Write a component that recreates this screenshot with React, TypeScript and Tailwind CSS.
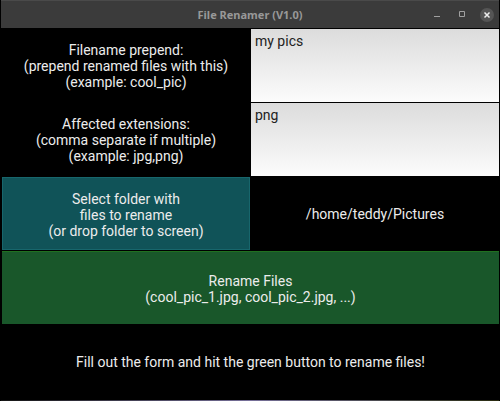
import type { ReactNode } from "react";

function FieldLabel({ htmlFor, children }: { htmlFor: string; children: ReactNode }) {
  return (
    <label htmlFor={htmlFor} className="flex items-center justify-center pt-0.5 text-center">
      <span>{children}</span>
    </label>
  );
}

function FieldInput({ id, value }: { id: string; value: string }) {
  return (
    <textarea
      id={id}
      defaultValue={value}
      spellCheck={false}
      className="mt-px block h-[73px] w-full resize-none border-0 bg-linear-to-b from-[#dcdcdc] to-[#fcfcfc] px-1 pt-1 text-[#222222] outline-none"
    />
  );
}

export default function App() {
  return (
    <div className="flex min-h-screen flex-col bg-black px-px font-[Roboto,sans-serif] text-[14px] leading-4 text-[#ececec]">
      <header className="grid h-7 grid-cols-[1fr_auto_1fr] items-center border-t border-[#4a4a4a] bg-[#3b3b3b]">
        <h1 className="col-start-2 font-['Noto_Sans',sans-serif] text-[11px] font-bold text-[#989898]">
          File Renamer (V1.0)
        </h1>
        <div className="flex items-center justify-end gap-[11px] pr-[5px]">
          <button aria-label="Minimize" className="flex h-3.5 w-3.5 items-center justify-center">
            <svg width="14" height="14" viewBox="0 0 14 14" fill="none" stroke="#a0a0a0">
              <path d="M4 8.5h6" />
            </svg>
          </button>
          <button aria-label="Maximize" className="flex h-3.5 w-3.5 items-center justify-center">
            <svg width="14" height="14" viewBox="0 0 14 14" fill="none" stroke="#a0a0a0">
              <path d="M4.5 3.5h5v5h-5z" />
            </svg>
          </button>
          <button aria-label="Close" className="flex h-3.5 w-3.5 items-center justify-center rounded-full bg-[#555555]">
            <svg width="14" height="14" viewBox="0 0 14 14" fill="none" stroke="#eeeeee" strokeWidth="1.5">
              <path d="M4.5 4.5l5 5M9.5 4.5l-5 5" />
            </svg>
          </button>
        </div>
      </header>

      <main className="grid flex-1 auto-rows-[74px] grid-cols-2 gap-x-px pb-0.5 pl-px">
        <FieldLabel htmlFor="prepend">
          Filename prepend:
          <br />
          (prepend renamed files with this)
          <br />
          (example: cool_pic)
        </FieldLabel>
        <FieldInput id="prepend" value="my pics" />

        <FieldLabel htmlFor="extensions">
          Affected extensions:
          <br />
          (comma separate if multiple)
          <br />
          (example: jpg,png)
        </FieldLabel>
        <FieldInput id="extensions" value="png" />

        <button className="mt-px border border-[#17666c] bg-[#105358] pt-0.5">
          Select folder with
          <br />
          files to rename
          <br />
          (or drop folder to screen)
        </button>
        <output className="flex items-center justify-center pt-0.5">/home/teddy/Pictures</output>

        <button className="col-span-2 mt-px border-t border-[#207020] bg-[#19572a] pt-0.5">
          Rename Files
          <br />
          (cool_pic_1.jpg, cool_pic_2.jpg, ...)
        </button>

        <p className="col-span-2 flex items-center justify-center pt-0.5">
          Fill out the form and hit the green button to rename files!
        </p>
      </main>
      <div className="h-px bg-linear-to-r from-[#151515] via-[#77709a] to-[#292b10]" />
    </div>
  );
}
